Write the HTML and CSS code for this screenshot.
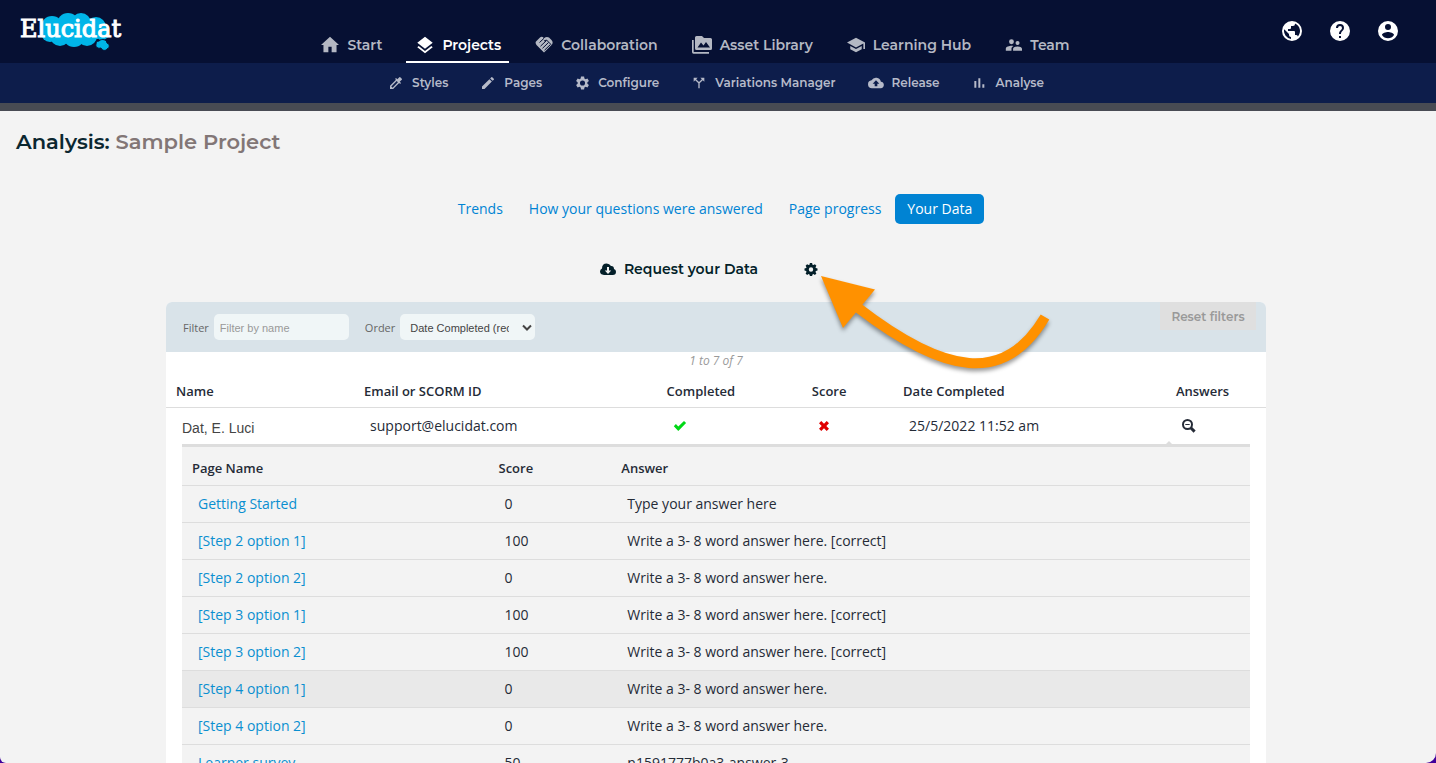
FILE: index.html
```html
<!DOCTYPE html>
<html lang="en">
<head>
<meta charset="utf-8">
<title>Analysis: Sample Project - Elucidat</title>
<link rel="stylesheet" href="styles.css">
</head>
<body>
<div class="window">
  <header class="topbar">
    <a class="logo" href="#" aria-label="Elucidat home">
      <svg class="logo-cloud" width="72" height="38" viewBox="0 0 72 38" aria-hidden="true">
        <g fill="#00b5e8">
          <circle cx="12" cy="14" r="11"/><circle cx="28" cy="11" r="11"/><circle cx="41" cy="10" r="10"/><circle cx="56" cy="14" r="10"/>
          <circle cx="10" cy="20" r="9"/><circle cx="20" cy="23" r="10"/><circle cx="34" cy="23" r="11"/><circle cx="47" cy="23" r="10"/><circle cx="62" cy="20" r="7"/>
          <rect x="10" y="10" width="48" height="16"/>
        </g>
        <g fill="#00b5e8" stroke="#061033" stroke-width="1">
          <path d="M59 28c3-3 8-1 8 2 3 1 3 5 0 6-1 2-5 2-6-1-3 1-6-1-5-4 0-2 1-3 3-3z"/>
        </g>
      </svg>
      <span class="logo-text">Elucidat</span>
    </a>
    <nav class="mainnav" aria-label="Main">
      <a class="mainnav-item" href="#">
        <svg width="18" height="18" viewBox="1 2 22 20"><path d="M10 21v-7h4v7h6v-9h3L12 2 1 12h3v9z"/></svg>Start</a>
      <a class="mainnav-item is-active" href="#" aria-current="page">
        <svg width="18" height="18" viewBox="2 1 20 21"><path d="M12 18.5l-7.400-5.700L3 14l9 7 9-7-1.600-1.300zM12 16l9-7-9-7-9 7z"/></svg>Projects</a>
      <a class="mainnav-item" href="#">
        <svg width="18" height="18" viewBox="0 0 18 18"><path d="M5 1.500 1 5.500Q0 7 1.500 9L9 16.500 17 8.500Q18.500 6 16.500 4L14 1.500Q11.500 0 9 2.300 7-.2 5 1.500z"/><g class="icon-cut"><path d="M9 2.300 4.500 6.500M11.500 4.500 5.500 10.200M13.500 6.500 7.500 12.300M15.500 8.500 9.500 14.200M9 5l2.500-1 4.500 4.500"/></g></svg>Collaboration</a>
      <a class="mainnav-item" href="#">
        <svg width="20" height="18" viewBox="0 0 20 18"><path d="M0 4h1.700v12H17v1.700H1.500Q0 17.700 0 16zM4.500 0H10l2 2h6.500Q20 2 20 3.500v9q0 1.500-1.500 1.500h-14Q3 14 3 12.500v-11Q3 0 4.500 0z"/><path class="icon-hole" d="M5.500 11.500 9 6.500l2.500 3L14 6l4 5.500z"/></svg>Asset Library</a>
      <a class="mainnav-item" href="#">
        <svg width="18" height="18" viewBox="1 2 22 20"><path d="M5 13.200v4L12 21l7-3.800v-4L12 17zM12 3L1 9l11 6 9-4.900V17h2V9z"/></svg>Learning Hub</a>
      <a class="mainnav-item" href="#">
        <svg width="17" height="18" viewBox="1 2 21 20"><path d="M16.500 12a2.500 2.500 0 1 0 0-5 2.500 2.500 0 0 0 0 5zM9 11a3 3 0 1 0 0-6 3 3 0 0 0 0 6zm7.500 3c-1.800 0-5.500.900-5.500 2.800V19h11v-2.200c0-1.900-3.700-2.800-5.500-2.800zM9 13c-2.300 0-7 1.200-7 3.500V19h7v-2.200c0-.900.300-2.300 2.400-3.500-.900-.200-1.700-.300-2.400-.300z"/></svg>Team</a>
    </nav>
    <div class="actions">
      <button class="icon-button" type="button" aria-label="Language"><svg width="24" height="24" viewBox="0 0 24 24"><path d="M12 2a10 10 0 1 0 0 20 10 10 0 0 0 0-20zm-1 17.930A8 8 0 0 1 4.210 10.210L9 15v1a2 2 0 0 0 2 2zm6.900-2.540A2 2 0 0 0 16 16h-1v-3a1 1 0 0 0-1-1H8v-2h2a1 1 0 0 0 1-1V7h2a2 2 0 0 0 2-2v-.410a8 8 0 0 1 2.900 12.800z"/></svg></button>
      <button class="icon-button" type="button" aria-label="Help"><svg width="24" height="24" viewBox="0 0 24 24"><path d="M12 2a10 10 0 1 0 0 20 10 10 0 0 0 0-20zm1 17h-2v-2h2zm2.070-7.750-.9.920C13.450 12.900 13 13.500 13 15h-2v-.5c0-1.100.450-2.100 1.170-2.830l1.240-1.260c.370-.360.590-.860.590-1.410a2 2 0 1 0-4 0H8a4 4 0 1 1 8 0c0 .880-.360 1.680-.930 2.250z"/></svg></button>
      <button class="icon-button" type="button" aria-label="Account"><svg width="24" height="24" viewBox="0 0 24 24"><path d="M12 2a10 10 0 1 0 0 20 10 10 0 0 0 0-20zm0 3a3 3 0 1 1 0 6 3 3 0 0 1 0-6zm0 14.200a7.200 7.200 0 0 1-6-3.220c.030-1.990 4-3.080 6-3.080s5.970 1.090 6 3.080a7.200 7.200 0 0 1-6 3.220z"/></svg></button>
    </div>
  </header>
  <nav class="subnav" aria-label="Project">
    <a class="subnav-item" href="#"><svg width="16" height="16" viewBox="0 0 24 24"><path d="M20.700 5.600l-2.300-2.300a1 1 0 0 0-1.400 0l-3.100 3.100L12 4.500l-1.400 1.400 1.400 1.400-9 9V21h4.700l9-9 1.400 1.400 1.400-1.400-1.900-1.900 3.100-3.100a1 1 0 0 0 0-1.400zM6.900 19L5 17.100l8-8 1.900 1.900z"/></svg>Styles</a>
    <a class="subnav-item" href="#"><svg width="16" height="16" viewBox="0 0 24 24"><path d="M3 17.200V21h3.800L17.800 9.900l-3.700-3.700zM20.700 7a1 1 0 0 0 0-1.400l-2.300-2.300a1 1 0 0 0-1.400 0l-1.800 1.800 3.700 3.700z"/></svg>Pages</a>
    <a class="subnav-item" href="#"><svg width="16" height="16" viewBox="1 1 22 22"><path fill-rule="evenodd" d="M19.400 13l2.100 1.600-2 3.600-2.500-1-1.700 1-.4 2.800h-4.300l-.4-2.800-1.700-1-2.500 1-2.100-3.600L6 13v-2L3.900 9.400 6 5.800l2.500 1 1.700-1 .4-2.800h4.300l.4 2.800 1.700 1 2.500-1 2 3.600-2.100 1.600zM12.700 8.500a3.500 3.500 0 1 0 0 7 3.500 3.500 0 0 0 0-7z"/></svg>Configure</a>
    <a class="subnav-item" href="#"><svg width="16" height="16" viewBox="0 0 24 24"><path d="M4 4h6L7.700 6.300 12 10.600l4.300-4.300L14 4h6v6l-2.300-2.300L13 12.400V20h-2v-7.600L6.300 7.700 4 10z"/></svg>Variations Manager</a>
    <a class="subnav-item" href="#"><svg width="16" height="16" viewBox="0 0 24 24"><path d="M19.350 10.040A7.500 7.500 0 0 0 5.350 8.040 6 6 0 0 0 6 20h13a5 5 0 0 0 .350-9.960zM14 13v4h-4v-4H7l5-5 5 5z"/></svg>Release</a>
    <a class="subnav-item" href="#"><svg width="16" height="16" viewBox="0 0 24 24"><path d="M5 9h3v10H5zM11 5h3v14h-3zM17 14h3v5h-3z"/></svg>Analyse</a>
  </nav>

  <main class="page">
    <h1 class="title">Analysis: <span class="title-project">Sample Project</span></h1>
    <nav class="tabs" aria-label="Analysis">
      <a class="tab" href="#">Trends</a>
      <a class="tab" href="#">How your questions were answered</a>
      <a class="tab" href="#">Page progress</a>
      <a class="tab is-active" href="#" aria-current="page">Your Data</a>
    </nav>
    <div class="data-actions">
      <button class="plain-button" type="button"><svg width="16" height="14" viewBox="0 0 16 14"><path fill-rule="evenodd" d="M4 13Q0 12.500 0 9.500 0 7.500 2 6.500 2 1.500 6.700 1.500 9.500 1.500 11 4q3-.2 3 3 2 .8 2 2.800Q16 13 12.700 13zM7 5v3.500H4.800L8 12l3.200-3.500H9V5z"/></svg>Request your Data</button>
      <button class="plain-button" type="button" aria-label="Data settings"><svg width="14" height="14" viewBox="0 0 14 14"><path fill-rule="evenodd" d="M5.900 1h2.200l.4 1.700.9.400 1.500-.9 1.500 1.500-.9 1.500.4.900 1.600.3v2.200l-1.600.4-.4.900.9 1.500-1.500 1.500-1.500-.9-.9.400L8.100 14H5.900l-.4-1.600-.9-.4-1.500.9-1.500-1.500.9-1.500-.4-.9L.5 8.600V6.400l1.600-.3.4-.9-.9-1.500 1.500-1.500 1.500.9.900-.4zM7 5.300a2.200 2.200 0 1 0 0 4.400 2.200 2.200 0 0 0 0-4.400z"/></svg></button>
    </div>

    <section class="panel">
      <form class="filters">
        <label class="filter-label" for="filter-name">Filter</label>
        <input class="field" id="filter-name" type="text" placeholder="Filter by name">
        <label class="filter-label order-label" for="order">Order</label>
        <span class="select-wrap">
          <select class="field select" id="order"><option>Date Completed (recent first)</option><option>Name</option></select>
          <svg class="select-arrow" width="10" height="8" viewBox="0 0 10 8"><path d="M1 1.500l4 4 4-4"/></svg>
        </span>
        <button class="reset" type="reset" disabled>Reset filters</button>
      </form>
      <p class="count">1 to 7 of 7</p>
      <table class="results">
        <colgroup><col class="c-name"><col class="c-email"><col class="c-done"><col class="c-score"><col class="c-date"><col class="c-answers"></colgroup>
        <thead><tr><th>Name</th><th>Email or SCORM ID</th><th>Completed</th><th>Score</th><th>Date Completed</th><th>Answers</th></tr></thead>
        <tbody>
          <tr class="learner">
            <td class="learner-name">Dat, E. Luci</td>
            <td>support@elucidat.com</td>
            <td><svg role="img" aria-label="Yes" width="14" height="12" viewBox="0 0 14 12"><path fill="#00d816" d="M.8 6.200 2.900 4.100 5.300 6.500 11 .9l2.100 2.100-7.800 7.900z"/></svg></td>
            <td><svg role="img" aria-label="Failed" width="12" height="12" viewBox="0 0 12 12"><path fill="#e00000" d="M3.300 1 6 3.700 8.700 1 11 3.300 8.300 6 11 8.700 8.700 11 6 8.300 3.300 11 1 8.700 3.700 6 1 3.300z"/></svg></td>
            <td>25/5/2022 11:52 am</td>
            <td><button class="toggle" type="button" aria-label="Hide answers"><svg width="14" height="14" viewBox="0 0 14 14"><circle cx="5.500" cy="5.500" r="4.500"/><path d="M3.300 5.500h4.400"/><path class="toggle-handle" d="M9 9l3.600 3.600"/></svg></button></td>
          </tr>
          <tr class="detail">
            <td colspan="6">
              <div class="answers-box">
              <table class="answers">
                <colgroup><col class="a-page"><col class="a-score"><col class="a-answer"></colgroup>
                <thead><tr><th>Page Name</th><th>Score</th><th>Answer</th></tr></thead>
                <tbody>
                  <tr><td><a href="#">Getting Started</a></td><td>0</td><td>Type your answer here</td></tr>
                  <tr><td><a href="#">[Step 2 option 1]</a></td><td>100</td><td>Write a 3- 8 word answer here. [correct]</td></tr>
                  <tr><td><a href="#">[Step 2 option 2]</a></td><td>0</td><td>Write a 3- 8 word answer here.</td></tr>
                  <tr><td><a href="#">[Step 3 option 1]</a></td><td>100</td><td>Write a 3- 8 word answer here. [correct]</td></tr>
                  <tr><td><a href="#">[Step 3 option 2]</a></td><td>100</td><td>Write a 3- 8 word answer here. [correct]</td></tr>
                  <tr class="is-hovered"><td><a href="#">[Step 4 option 1]</a></td><td>0</td><td>Write a 3- 8 word answer here.</td></tr>
                  <tr><td><a href="#">[Step 4 option 2]</a></td><td>0</td><td>Write a 3- 8 word answer here.</td></tr>
                  <tr><td><a href="#">Learner survey</a></td><td>50</td><td>n1591777b0a3-answer-3</td></tr>
                </tbody>
              </table>
              </div>
            </td>
          </tr>
        </tbody>
      </table>
      <svg class="pointer" width="250" height="120" viewBox="810 266 250 120" aria-hidden="true">
        <path d="M857 307C945 375 1005 385 1045 317" fill="none" stroke="#ff9100" stroke-width="10"/>
        <path d="M821 276l54 13.500-32 38.500z" fill="#ff9100"/>
      </svg>
    </section>
  </main>
</div>
</body>
</html>
```
FILE: styles.css
```css
* { box-sizing: border-box; }

body {
  margin: 0;
  background: #40009a;
  color: #252b37;
  font-family: "Open Sans", sans-serif;
  font-size: 14px;
}

a { text-decoration: none; }
button { border: 0; background: none; padding: 0; font: inherit; color: inherit; cursor: pointer; }
svg { display: block; flex: none; }

.window {
  display: flex;
  flex-direction: column;
  height: 100vh;
  overflow: hidden;
  background: #f3f3f3;
  border-radius: 0 0 10px 6px;
}

/* Header */
.topbar {
  display: flex;
  flex: none;
  height: 63px;
  background: #061033;
}

.logo { position: relative; flex: none; width: 123px; color: #fff; }
.logo-cloud { position: absolute; left: 40px; top: 13px; }
.logo-text {
  position: absolute;
  left: 20px;
  top: 14px;
  font: 24px/30px "DejaVu Serif", serif;
  -webkit-text-stroke: 1px #fff;
}

.mainnav { display: flex; flex: 1; justify-content: center; gap: 16px; padding-top: 28px; }
.mainnav-item {
  display: flex;
  align-items: center;
  gap: 8px;
  padding: 0 8px 0 10px;
  border-bottom: 2px solid transparent;
  color: #b4b8c3;
  font: 600 14px/20px Montserrat, Inter, sans-serif;
  white-space: nowrap;
}
.mainnav-item svg, .subnav-item svg { fill: currentColor; }
.mainnav-item.is-active { color: #fff; border-bottom-color: #fff; }
.icon-cut { fill: none; stroke: #061033; stroke-width: 1; }
.mainnav-item .icon-hole { fill: #061033; }

.actions { display: flex; flex: none; gap: 24px; padding: 19px 36px 0 14px; }
.icon-button { width: 24px; height: 24px; color: #fff; }
.icon-button svg { fill: currentColor; }

.subnav {
  display: flex;
  flex: none;
  justify-content: center;
  gap: 32px;
  height: 48px;
  padding-right: 4px;
  background: #0d1d4b;
  border-bottom: 8px solid #484b53;
}
.subnav-item {
  display: flex;
  align-items: center;
  gap: 8px;
  color: #b6bac9;
  font: 600 12px/20px Montserrat, Inter, sans-serif;
  white-space: nowrap;
}

/* Page */
.page { flex: 1; min-height: 0; padding: 16px 4px 0 0; }
.title {
  margin: 0 16px;
  color: #0b2730;
  font: 600 21px/30px Montserrat, Inter, sans-serif;
}
.title-project { color: #827676; }

.tabs { display: flex; justify-content: center; gap: 2px; margin-top: 37px; padding-right: 2px; }
.tab { padding: 0 12px; border-radius: 5px; color: #0083d3; line-height: 30px; }
.tab.is-active { background: #0083d3; color: #fff; }

.data-actions {
  display: flex;
  justify-content: center;
  gap: 46px;
  margin-top: 30px;
  padding-right: 14px;
}
.plain-button {
  display: flex;
  align-items: center;
  gap: 8px;
  color: #031f29;
  font: 600 14px/30px Montserrat, Inter, sans-serif;
}
.plain-button svg { fill: currentColor; }

.panel {
  position: relative;
  max-width: 1100px;
  margin: 18px auto 0;
  background: #fff;
  border-radius: 6px;
}

.filters {
  display: flex;
  align-items: center;
  height: 50px;
  padding: 0 10px 0 17px;
  background: #d9e3e9;
  border-radius: 6px 6px 0 0;
}
.filter-label { margin-right: 5px; color: #666; font-size: 11px; }
.order-label { margin-left: 16px; }
.field {
  width: 135px;
  height: 26px;
  padding: 2px 6px 0;
  border: 0;
  border-radius: 5px;
  background: #f0f6f7;
  color: #444;
  font: 11px "Liberation Sans", Arial, sans-serif;
}
.field::placeholder { color: #999; opacity: 1; }
.select-wrap { position: relative; }
.select { display: block; appearance: none; padding: 2px 26px 0 10px; }
.select-arrow { position: absolute; right: 3px; top: 10px; fill: none; stroke: #444; stroke-width: 2; pointer-events: none; }
.reset {
  align-self: flex-start;
  width: 96px;
  height: 28px;
  margin-left: auto;
  background: #dfdfdf;
  color: #999;
  font: 600 12px Montserrat, Inter, sans-serif;
}

.count { margin: 0; color: #999; font-size: 12px; font-style: italic; line-height: 18px; text-align: center; }

/* Tables */
table { width: 100%; border-collapse: separate; border-spacing: 0; table-layout: fixed; }
th { padding: 0 10px; border-bottom: 1px solid #ddd; font-size: 13px; font-weight: 600; text-align: left; white-space: nowrap; }
td { padding: 0 16px; white-space: nowrap; }

.c-name { width: 17.1%; }
.c-email { width: 27.5%; }
.c-done { width: 13.2%; }
.c-score { width: 8.3%; }
.c-date { width: 24.8%; }
.c-answers { width: 9.1%; }
.results > thead th { height: 38px; padding-top: 4px; }
.learner td { height: 36px; padding-bottom: 1px; }
.learner .learner-name { padding-top: 4px; color: #444; font-family: "Liberation Sans", Arial, sans-serif; }
.toggle { display: block; margin-top: 1px; }
.toggle svg { fill: none; stroke: #252b37; stroke-width: 2; }
.toggle path { stroke-width: 1; }
.toggle .toggle-handle { stroke-width: 3; }

.answers-box { position: relative; border-top: 3px solid #ddd; background: #f3f3f3; }
.answers-box::before {
  content: "";
  position: absolute;
  right: 78px;
  top: -6px;
  border: 3px solid transparent;
  border-top: 0;
  border-bottom-color: #ddd;
}
.a-page { width: 28.7%; }
.a-score { width: 11.5%; }
.a-answer { width: 59.8%; }
.answers th { height: 39px; padding-top: 4px; }
.answers td { height: 37px; padding-bottom: 1px; border-bottom: 1px solid #ddd; }
.answers a { color: #0a8fd0; }
.is-hovered { background: #e9e9e9; }

/* Callout arrow lying over the panel */
.pointer { position: absolute; left: 644px; top: -36px; filter: drop-shadow(0 3px 2px rgba(0, 0, 0, .4)); pointer-events: none; }
```
